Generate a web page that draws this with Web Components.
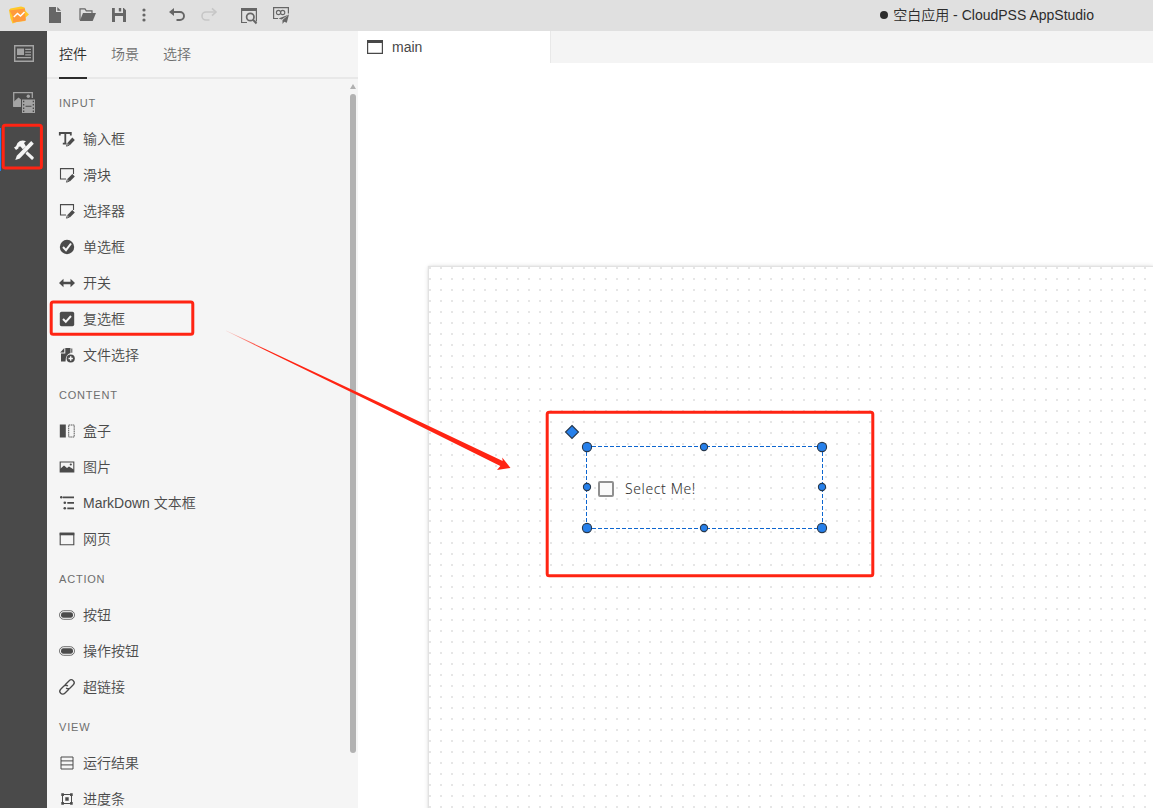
<!DOCTYPE html>
<html lang="zh-CN">
<head>
<meta charset="utf-8">
<title>空白应用 - CloudPSS AppStudio</title>
<style>
html,body{margin:0;height:100%;overflow:hidden}
body{font:350 14px "Liberation Sans","Noto Sans CJK SC",sans-serif;color:#484848}
</style>
</head>
<body>
<studio-app></studio-app>
<script>
const ICONS = {
  logo:'<path d="m1.500 2.500 10.500-2 3.500 1 1 3.500 3.500 3.500-3.500 3-.5 3.500-8 1-4.500 1.500-2-5L0 4z" fill="#ffc928"/><path d="m.5 4.500 15.500-2-.3 3.500 1.300 8.500L4 16.500 3.500 10z" fill="#ff9a3c"/><path d="m4.800 11 3.700-3.500 3 2.500 4-4" fill="none" stroke="#fff" stroke-width="1.500"/>',
  file:'<path d="M0 0h7v5h5v11H0z"/><path d="M8.300 0v3.700H12z"/>',
  folder:'<path d="M1 12V.8h5l1.300 2H13V5" fill="none" stroke="currentColor" stroke-width="1.200"/><path d="M4 5h13l-3.300 8H.7z"/>',
  save:'<path fill-rule="evenodd" d="M0 0h2.800v5H11V0h.8L14 2.200V14H0zm3 8v6h8V8z"/><path d="M6.800 0h2.400v3.500H6.800z"/>',
  more:'<circle cx="2" cy="2" r="1.600"/><circle cx="2" cy="7" r="1.600"/><circle cx="2" cy="12" r="1.600"/>',
  undo:'<path d="M2 4h9a4 4 0 0 1 0 8H7.500" fill="none" stroke="currentColor" stroke-width="1.900"/><path d="M0 4 5 0v8z"/>',
  redo:'<path d="M14 4H5a4 4 0 0 0 0 8H8.500" fill="none" stroke="currentColor" stroke-width="1.600"/><path d="M11 .3 15 4 11 7.700" fill="none" stroke="currentColor" stroke-width="1.600"/>',
  preview:'<path d="M6 14.500H.6V.6h14.800v13" fill="none" stroke="currentColor" stroke-width="1.200"/><path d="M0 0h16v3H0z"/><circle cx="9.300" cy="9" r="3.700" fill="none" stroke="currentColor" stroke-width="1.700"/><path d="m12 11.700 3.500 3.800" stroke="currentColor" stroke-width="2"/>',
  publish:'<path d="M5 11.500H.6V.6h14.800v6" fill="none" stroke="currentColor" stroke-width="1.200"/><circle cx="5.500" cy="5.500" r="2.100" fill="none" stroke="currentColor" stroke-width="1.100"/><circle cx="9.700" cy="5.500" r="2.100" fill="none" stroke="currentColor" stroke-width="1.100"/><path d="M16 7.500 5.500 11.500l3.200 1zM16 7.500l-6.500 5.600V17l1.700-2.300 2.600 1z"/>',
  news:'<path d="M.7.700h18.600v15.600H.7z" fill="none" stroke="currentColor" stroke-width="1.400"/><path d="M3 3.500h7v6.500H3zM11.200 3.800H17v1.300h-5.800zm0 2.700H17v1.300h-5.800zm0 2.700H17v1.300h-5.800zM3 12h14v1.300H3z"/>',
  media:'<path d="M.7 14V.7h18.600V6" fill="none" stroke="currentColor" stroke-width="1.300"/><path d="M1 9.500 5.500 5.500 8 7.500V15H0z"/><circle cx="15.300" cy="4.200" r="1.700"/><path fill-rule="evenodd" d="M9 7.500h13V21H9zm1 1.200v1.500h1.300V8.700zm0 3.300v1.500h1.300V12zm0 3.400v1.500h1.300v-1.500zm0 3v1.500h1.300v-1.500zm9.700-9.700v1.500H21V8.700zm0 3.300v1.500H21V12zm0 3.400v1.500H21v-1.500zm0 3v1.500H21v-1.500zM12.500 13.800v1h6v-1z"/>',
  tools:'<path d="m0 7.500 2-1.300L3.500 3Q7-.8 12 1.300L10 3l2 3.500L8.800 9.300 6.500 6.500 4.700 6.700 4.300 8.500 2 10z"/><path d="m17.200 1 2.600 2.700L5.800 18.600 1.300 20 2.800 15.700z"/><path d="m13.200 11.300 6.600 6q.2 1.400-1.800 2.700l-6.500-6.300z"/>',
  window:'<path d="M.6.6h14.800v12.800H.6z" fill="none" stroke="currentColor" stroke-width="1.200"/><path d="M0 0h16v3H0z"/>',
  input:'<path d="M.8 4.500V2h11v2.500M6.300 2v10.500M3.800 12.700h4.700" fill="none" stroke="currentColor" stroke-width="1.800"/><path d="m13.500 5.500 3 2.600-6 6.500-3.800 1.300 1-4.300z" fill="#f5f5f5"/><path d="m13.300 6.600 2.500 2.400-5 5.300-2.400-2.300z"/><path d="m8.300 12.500 1.700 1.800-2.500.9z" fill="none" stroke="currentColor" stroke-width=".9"/>',
  edit:'<path d="M7 12H1.500V1.600H14.500V7" fill="none" stroke="currentColor" stroke-width="1.100"/><path d="m13.300 7 2.500 2.400-5 5-2.400-2.300z"/><path d="m8.300 12.500 1.700 1.800-2.500.9z" fill="none" stroke="currentColor" stroke-width=".9"/>',
  radio:'<circle cx="8" cy="8" r="7.200"/><path d="m4 8 3 3.200L12 4.500" fill="none" stroke="#f5f5f5" stroke-width="2"/>',
  switch:'<path d="m0 8 4.500-4.200v2.900h7V3.800L16 8l-4.500 4.200V9.300h-7v2.900z"/>',
  check:'<rect x=".8" y=".8" width="14.400" height="14.400" rx="1.700"/><path d="m4 8 2.800 2.800L12 5" fill="none" stroke="#f5f5f5" stroke-width="2"/>',
  files:'<path d="M5.300 1v4.500H1.200zM6.300 1h5.200v5Q6.500 7 6.500 14.500H2V6.500h4.300z"/><path d="M12.300 1.500h1v4.300h-1z"/><circle cx="11.700" cy="11.500" r="4.100"/><path d="M11.700 9.300v4.400M9.500 11.500h4.400" stroke="#f5f5f5" stroke-width="1.400"/>',
  box:'<path d="M.8 1.500h6v13h-6z"/><path d="M9.700 2h5.500v12H9.700z" fill="none" stroke="currentColor" stroke-dasharray="1.600 .6" stroke-width=".9"/>',
  image:'<path d="M1.200 3h13.600v10H1.200z" fill="none" stroke="currentColor" stroke-width="1.100"/><path d="m1 10 4-3.500L8 9l2-1.500 4.800 3V13H1z"/><circle cx="11.800" cy="5.500" r="1.100"/>',
  tree:'<circle cx="2.300" cy="2.300" r="1.300"/><circle cx="5.800" cy="7.800" r="1.300"/><circle cx="5.800" cy="13.300" r="1.300"/><path d="M4 1.500H15v1.700H4zM8.300 7H15v1.700H8.300zM8.300 12.500H15v1.700H8.300z"/>',
  web:'<path d="M1.200 2.200h13.600v11.600H1.200z" fill="none" stroke="currentColor" stroke-width="1.100"/><path d="M.7 1.700h14.600v2.600H.7z"/>',
  button:'<rect x=".5" y="3.700" width="15" height="8.600" rx="4.200" fill="none" stroke="currentColor" stroke-width=".8"/><rect x="2" y="5.200" width="12" height="5.600" rx="2.300"/>',
  link:'<g transform="rotate(-45 8 8)" fill="none" stroke="currentColor" stroke-width="1.300"><path d="M8.500 10.300q-.5.600-1.500.6H2a2.900 2.900 0 0 1 0-5.800H6.500q2.600.3 2.800 2.900"/><path d="M7.500 5.700q.5-.6 1.500-.6h5a2.900 2.900 0 0 1 0 5.800H9.500q-2.600-.3-2.800-2.900"/></g>',
  table:'<path d="M2 2h12v12H2zM2 5.900h12M2 9.900h12" fill="none" stroke="currentColor" stroke-width="1"/>',
  progress:'<path d="M3.500 3.500h9v9h-9z" fill="none" stroke="currentColor" stroke-width="1"/><path d="M2.300 2.300h2.600v2.600H2.300zm8.800 0h2.600v2.600h-2.600zM2.300 11.100h2.600v2.600H2.300zm8.800 0h2.600v2.600h-2.600zM6.300 6.300h3.400v3.400H6.300z"/>'
};
function define(name, html, after){
  const t=document.createElement('template'); t.innerHTML=html;
  customElements.define(name, class extends HTMLElement{
    connectedCallback(){
      if(this.shadowRoot) return;
      this.attachShadow({mode:'open'}).append(t.content.cloneNode(true));
      if(after) after(this,this.shadowRoot);
    }
  });
}
define('ui-icon','<style>:host{display:block;flex:none}svg{display:block;fill:currentColor;overflow:visible}</style>',(h,r)=>{
  const w=h.getAttribute('w')||16, g=h.getAttribute('h')||16;
  h.style.width=w+'px'; h.style.height=g+'px';
  r.innerHTML+=`<svg width="${w}" height="${g}" viewBox="0 0 ${w} ${g}">${ICONS[h.getAttribute('name')]}</svg>`;
});
define('title-bar',`<style>
:host{display:flex;align-items:flex-start;height:31px;background:#e0e0e0;color:#666;box-sizing:border-box;padding-right:59px}
.tools{display:flex;align-items:center;height:30px;padding-left:9px;flex:1}
.title{display:flex;align-items:center;color:#2c2c2c;white-space:pre;line-height:31px;height:31px}
.dot{width:8px;height:8px;border-radius:50%;background:#2c2c2c;margin:0 5px 1px 0}
.dim{color:#c6c6c6}
</style>
<div class="tools">
<ui-icon name="logo" w="20" h="18"></ui-icon>
<ui-icon name="file" w="12" h="16" style="margin-left:20px"></ui-icon>
<ui-icon name="folder" w="17" h="14" style="margin-left:18px"></ui-icon>
<ui-icon name="save" w="14" h="14" style="margin-left:16px"></ui-icon>
<ui-icon name="more" w="4" h="14" style="margin-left:16px"></ui-icon>
<ui-icon name="undo" w="16" h="14" style="margin-left:23px"></ui-icon>
<ui-icon class="dim" name="redo" w="16" h="14" style="margin-left:16px"></ui-icon>
<ui-icon name="preview" w="16" h="14" style="margin-left:24px"></ui-icon>
<ui-icon name="publish" w="16" h="16" style="margin-left:16px"></ui-icon>
</div>
<div class="title"><span class="dot"></span><span>空白应用 - CloudPSS AppStudio</span></div>`);
define('activity-bar',`<style>
:host{display:flex;flex-direction:column;width:47px;background:#4a4a4a;color:#a4a4a4}
div{height:48px;display:flex;align-items:center;padding-left:14px;box-sizing:border-box}
.m{padding-left:13px}
.on{color:#f4f4f4;border-left:1px solid #2680eb;padding-left:13px;height:43px}
</style>
<div style="height:45px"><ui-icon name="news" w="20" h="17"></ui-icon></div>
<div class="m" style="height:52px"><ui-icon name="media" w="22" h="21"></ui-icon></div>
<div class="on"><ui-icon name="tools" w="20" h="20"></ui-icon></div>`);
define('panel-tabs',`<style>
:host{display:flex;gap:24px;height:48px;box-sizing:border-box;border-bottom:2px solid #e8e8e8;padding-left:12px;color:#6e6e6e;line-height:46px}
b{font-weight:inherit;color:#2c2c2c;height:48px;box-sizing:border-box;border-bottom:2px solid #2c2c2c}
</style><b>控件</b><span>场景</span><span>选择</span>`);
define('widget-group',`<style>
:host{display:block;margin-top:4px}
h3{margin:0;height:36px;line-height:36px;font-size:11px;font-weight:400;letter-spacing:.8px;color:#6e6e6e;padding-left:12px}
</style><h3></h3><slot></slot>`,(h,r)=>r.querySelector('h3').textContent=h.getAttribute('label'));
define('widget-item',`<style>
:host{display:flex;align-items:center;gap:8px;height:36px;padding-left:12px;color:#4b4b4b;line-height:36px;white-space:nowrap}
</style><ui-icon></ui-icon><span><slot></slot></span>`,(h,r)=>{
  const i=document.createElement('ui-icon'); i.setAttribute('name',h.getAttribute('icon'));
  r.querySelector('ui-icon').replaceWith(i);
});
define('scroll-bar',`<style>
:host{display:flex;flex-direction:column;align-items:center;width:6px;margin-right:2px}
i{width:0;height:0;border:3px solid transparent;border-top:0;border-bottom:5px solid #b0b0b0;margin-top:5px}
b{width:6px;height:659px;border-radius:3px;background:#b2b2b2;margin-top:5px}
</style><i></i><b></b>`);
define('widget-panel',`<style>
:host{display:flex;flex-direction:column;width:311px;background:#f5f5f5}
.body{display:flex;flex:1;min-height:0;overflow:hidden}
.list{flex:1;padding-top:2px}
</style><panel-tabs></panel-tabs>
<div class="body"><div class="list">
<widget-group label="INPUT"><widget-item icon="input">输入框</widget-item><widget-item icon="edit">滑块</widget-item><widget-item icon="edit">选择器</widget-item><widget-item icon="radio">单选框</widget-item><widget-item icon="switch">开关</widget-item><widget-item icon="check">复选框</widget-item><widget-item icon="files">文件选择</widget-item></widget-group>
<widget-group label="CONTENT"><widget-item icon="box">盒子</widget-item><widget-item icon="image">图片</widget-item><widget-item icon="tree">MarkDown 文本框</widget-item><widget-item icon="web">网页</widget-item></widget-group>
<widget-group label="ACTION"><widget-item icon="button">按钮</widget-item><widget-item icon="button">操作按钮</widget-item><widget-item icon="link">超链接</widget-item></widget-group>
<widget-group label="VIEW"><widget-item icon="table">运行结果</widget-item><widget-item icon="progress">进度条</widget-item></widget-group>
</div><scroll-bar></scroll-bar></div>`);
define('editor-tabs',`<style>
:host{display:flex;height:32px;background:#f4f4f4;flex:none}
div{background:#fff;display:flex;align-items:center;gap:9px;padding-left:9px;box-sizing:border-box;line-height:32px;border-right:1px solid #e8e8e8;width:193px}
</style><div><ui-icon name="window" w="16" h="14"></ui-icon><span>main</span></div>`);
define('selected-checkbox',`<style>
:host{position:absolute;left:157px;top:179px;width:237px;height:83px}
svg{position:absolute;left:-30px;top:-30px;overflow:visible}
label{display:flex;align-items:center;gap:11px;height:86px;padding-left:12px;font:350 14px "Noto Sans","Open Sans",sans-serif;color:#303030;white-space:nowrap}
i{width:16px;height:16px;box-sizing:border-box;border:2px solid #909090;border-radius:2px;background:#fafafa}
span{margin-top:-1px;letter-spacing:.6px}
</style><label><i></i><span>Select Me!</span></label>
<svg width="280" height="120"><path d="M30 30.500h237M30 112.500h237M30.500 30v83M266.500 30v83" fill="none" stroke="#0d66d0" stroke-dasharray="4 2"/>
<g fill="#2680eb" stroke="#27384c" stroke-width="1.100"><circle cx="31" cy="31" r="4.600"/><circle cx="266" cy="31" r="4.600"/><circle cx="31" cy="112" r="4.600"/><circle cx="266" cy="112" r="4.600"/><circle cx="148" cy="31" r="3.600"/><circle cx="148" cy="112" r="3.600"/><circle cx="31" cy="71" r="3.600"/><circle cx="266" cy="71" r="3.600"/><path d="m16 9.500 6.500 6.500-6.500 6.500L9.500 16z"/></g></svg>`);
define('design-canvas',`<style>
:host{display:block;flex:1;min-height:0;background:#fff;padding:204px 0 0 71px;overflow:hidden}
.board{position:relative;height:600px;box-shadow:0 0 1px 1px #e2e2e2,0 0 5px rgba(0,0,0,.2);background:#fff}
.dots{display:block;height:100%;width:100%}
</style><div class="board"><svg class="dots"><defs><pattern id="p" width="11" height="11" patternUnits="userSpaceOnUse"><path d="M0 0h2v2H0z" fill="#e6e6e6"/></pattern></defs><rect width="100%" height="100%" fill="url(#p)"/></svg><selected-checkbox></selected-checkbox></div>`);
define('callout-layer',`<style>
:host{position:absolute;inset:0;pointer-events:none}svg{display:block}
</style><svg width="1153" height="808"><defs><linearGradient id="f" gradientUnits="userSpaceOnUse" x1="226" y1="331" x2="265" y2="350"><stop stop-color="#ff2413" stop-opacity=".1"/><stop offset="1" stop-color="#ff2413"/></linearGradient></defs>
<g fill="none" stroke="#ff2413" stroke-width="3"><rect x="3.200" y="125.200" width="38.200" height="42.700" rx="2"/><rect x="51.200" y="302" width="141.600" height="32.200" rx="2"/><rect x="547.200" y="412.200" width="325.600" height="163.600" rx="2"/></g>
<path d="m226.200 330.600 152 71.400 124.500 59-.5-3.500 8.300 10.500-13.500 2 3.300-4L378 405.300 226 331z" fill="url(#f)"/></svg>`);
define('studio-app',`<style>
:host{display:flex;flex-direction:column;height:808px;width:1153px;position:relative;overflow:hidden}
main{display:flex;flex:1;min-height:0}
section{flex:1;display:flex;flex-direction:column;min-width:0}
</style><title-bar></title-bar><main><activity-bar></activity-bar><widget-panel></widget-panel><section><editor-tabs></editor-tabs><design-canvas></design-canvas></section></main><callout-layer></callout-layer>`);
</script>
</body>
</html>
